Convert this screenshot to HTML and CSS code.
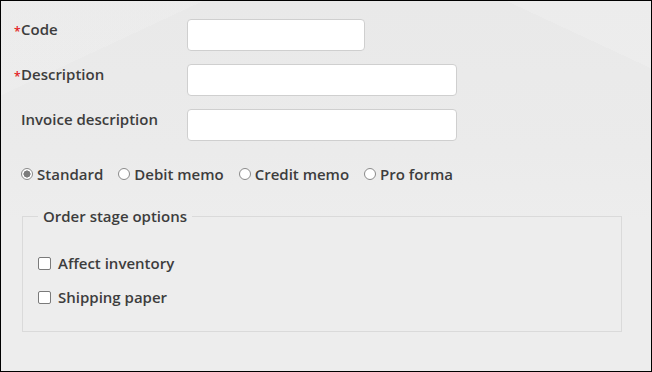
FILE: index.html
```html
<!DOCTYPE html>
<html>
<head>
<meta charset="utf-8">
<link rel="stylesheet" href="styles.css">
</head>
<body>
<div class="frame">
  <form class="form">
    <div class="row">
      <label class="label"><span class="req">*</span>Code</label>
      <input class="input input-short" type="text">
    </div>
    <div class="row">
      <label class="label"><span class="req">*</span>Description</label>
      <input class="input input-long" type="text">
    </div>
    <div class="row">
      <label class="label"><span class="req"></span>Invoice description</label>
      <input class="input input-long" type="text">
    </div>
    <div class="radios">
      <label class="radio"><input type="radio" name="kind" checked><span>Standard</span></label>
      <label class="radio"><input type="radio" name="kind"><span>Debit memo</span></label>
      <label class="radio"><input type="radio" name="kind"><span>Credit memo</span></label>
      <label class="radio"><input type="radio" name="kind"><span>Pro forma</span></label>
    </div>
    <fieldset class="group">
      <legend class="legend">Order stage options</legend>
      <label class="check"><input type="checkbox"><span>Affect inventory</span></label>
      <label class="check"><input type="checkbox"><span>Shipping paper</span></label>
    </fieldset>
  </form>
</div>
</body>
</html>
```
FILE: styles.css
```css
* { box-sizing: border-box; }
html, body { margin: 0; padding: 0; }
body {
  font-family: "Open Sans", "DejaVu Sans", sans-serif;
  font-weight: 600;
  font-size: 15px;
  color: #3d3d3d;
}
.frame {
  width: 652px;
  height: 372px;
  border: 1px solid #000;
  background-color: #ededed;
  background-image:
    linear-gradient(155deg, rgba(255,255,255,0.12) 0 14%, transparent 14% 100%),
    linear-gradient(205deg, rgba(255,255,255,0.15) 0 10%, transparent 10% 100%),
    linear-gradient(180deg, #e9e9e9 0, #ebebeb 150px, #ededed 220px, #ededed 100%);
  overflow: hidden;
}
.form {
  display: flex;
  flex-direction: column;
  padding: 18px 29px 0 12px;
}
.row {
  display: flex;
  align-items: flex-start;
  height: 32px;
  margin-bottom: 13px;
}
.label {
  width: 174px;
  line-height: 20px;
  display: flex;
}
.req {
  display: inline-block;
  width: 8px;
  color: #e31b1b;
  font-size: 12px;
  line-height: 20px;
  padding-left: 1px;
  margin-top: 3px;
}
.input {
  height: 32px;
  border: 1px solid #cfcfcf;
  border-radius: 4px;
  background: #fff;
  font: inherit;
  padding: 0 8px;
  outline: none;
}
.input-short { width: 178px; }
.input-long { width: 270px; }
.radios {
  display: flex;
  gap: 15px;
  margin-top: 10px;
  padding-left: 8px;
  line-height: 20px;
}
.radio, .check {
  display: flex;
  align-items: center;
}
.radio input {
  appearance: none;
  -webkit-appearance: none;
  width: 12px;
  height: 12px;
  margin: 0 4px 0 0;
  border: 1px solid #8a8a8a;
  border-radius: 50%;
  background: #fff;
}
.radio input:checked {
  background: radial-gradient(circle, #7d7d7d 0 3.3px, #fff 3.8px);
}
.group {
  margin: 22px 0 0 9px;
  width: 600px;
  border: 1px solid #dadada;
  padding: 27px 15px 24px;
  display: flex;
  flex-direction: column;
  gap: 14px;
}
.legend {
  padding: 0 5px;
  line-height: 20px;
}
.check { line-height: 20px; }
.check input {
  appearance: none;
  -webkit-appearance: none;
  width: 13px;
  height: 13px;
  margin: 0 7px 0 0;
  border: 1px solid #7a7a7a;
  border-radius: 2px;
  background: #fff;
}
```
